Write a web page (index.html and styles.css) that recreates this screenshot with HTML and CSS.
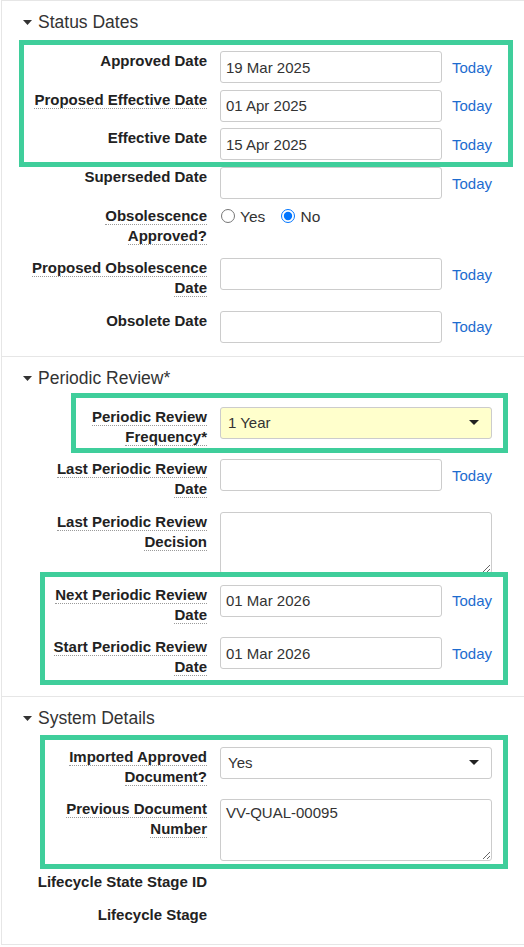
FILE: index.html
```html
<!DOCTYPE html>
<html lang="en">
<head>
<meta charset="utf-8">
<title>Document Details</title>
<link rel="stylesheet" href="styles.css">
</head>
<body>
<div class="page">

  <section class="section">
    <div class="hdr">
      <svg class="caret" width="9" height="5" viewBox="0 0 9 5"><path d="M0 0H9L4.5 5Z"/></svg>
      <span>Status Dates</span>
    </div>
    <div class="rows">
      <div class="group">
        <div class="row">
          <div class="label">Approved Date</div>
          <div class="value"><input class="date" type="text" value="19 Mar 2025"><a class="today" href="#">Today</a></div>
        </div>
        <div class="row">
          <div class="label"><span class="help">Proposed Effective Date</span></div>
          <div class="value"><input class="date" type="text" value="01 Apr 2025"><a class="today" href="#">Today</a></div>
        </div>
        <div class="row">
          <div class="label">Effective Date</div>
          <div class="value"><input class="date" type="text" value="15 Apr 2025"><a class="today" href="#">Today</a></div>
        </div>
        <div class="hl hl-1"></div>
      </div>
      <div class="row">
        <div class="label">Superseded Date</div>
        <div class="value"><input class="date" type="text" value=""><a class="today" href="#">Today</a></div>
      </div>
      <div class="row">
        <div class="label"><span class="help">Obsolescence Approved?</span></div>
        <div class="value value-radio">
          <label class="opt"><input type="radio" name="obs"><span>Yes</span></label>
          <label class="opt"><input type="radio" name="obs" checked><span>No</span></label>
        </div>
      </div>
      <div class="row">
        <div class="label"><span class="help">Proposed Obsolescence Date</span></div>
        <div class="value"><input class="date" type="text" value=""><a class="today" href="#">Today</a></div>
      </div>
      <div class="row">
        <div class="label">Obsolete Date</div>
        <div class="value"><input class="date" type="text" value=""><a class="today" href="#">Today</a></div>
      </div>
    </div>
  </section>

  <section class="section">
    <div class="hdr">
      <svg class="caret" width="9" height="5" viewBox="0 0 9 5"><path d="M0 0H9L4.5 5Z"/></svg>
      <span>Periodic Review*</span>
    </div>
    <div class="rows">
      <div class="group">
        <div class="row">
          <div class="label"><span class="help">Periodic Review Frequency*</span></div>
          <div class="value">
            <div class="select select-req"><span>1 Year</span><svg class="arrow" width="10" height="5" viewBox="0 0 10 5"><path d="M0 0H10L5 5Z"/></svg></div>
          </div>
        </div>
        <div class="hl hl-2"></div>
      </div>
      <div class="row">
        <div class="label"><span class="help">Last Periodic Review Date</span></div>
        <div class="value"><input class="date" type="text" value=""><a class="today" href="#">Today</a></div>
      </div>
      <div class="row">
        <div class="label"><span class="help">Last Periodic Review Decision</span></div>
        <div class="value value-top"><textarea class="area"></textarea></div>
      </div>
      <div class="group">
        <div class="row">
          <div class="label"><span class="help">Next Periodic Review Date</span></div>
          <div class="value"><input class="date" type="text" value="01 Mar 2026"><a class="today" href="#">Today</a></div>
        </div>
        <div class="row">
          <div class="label"><span class="help">Start Periodic Review Date</span></div>
          <div class="value"><input class="date" type="text" value="01 Mar 2026"><a class="today" href="#">Today</a></div>
        </div>
        <div class="hl hl-3"></div>
      </div>
    </div>
  </section>

  <section class="section">
    <div class="hdr">
      <svg class="caret" width="9" height="5" viewBox="0 0 9 5"><path d="M0 0H9L4.5 5Z"/></svg>
      <span>System Details</span>
    </div>
    <div class="rows">
      <div class="group">
        <div class="row">
          <div class="label"><span class="help">Imported Approved Document?</span></div>
          <div class="value">
            <div class="select"><span>Yes</span><svg class="arrow" width="10" height="5" viewBox="0 0 10 5"><path d="M0 0H10L5 5Z"/></svg></div>
          </div>
        </div>
        <div class="row">
          <div class="label"><span class="help">Previous Document Number</span></div>
          <div class="value value-top"><textarea class="area">VV-QUAL-00095</textarea></div>
        </div>
        <div class="hl hl-4"></div>
      </div>
      <div class="row">
        <div class="label">Lifecycle State Stage ID</div>
        <div class="value"></div>
      </div>
      <div class="row">
        <div class="label">Lifecycle Stage</div>
        <div class="value"></div>
      </div>
    </div>
  </section>

</div>
</body>
</html>
```

FILE: styles.css
```css
* { box-sizing: border-box; }

html, body {
  margin: 0;
  padding: 0;
  background: #ffffff;
}

body {
  font-family: "Liberation Sans", Arial, sans-serif;
  color: #333333;
  font-size: 15px;
}

.page {
  margin-left: 1px;
  border-left: 1px solid #e6e6e6;
  border-top: 1px solid #e6e6e6;
  border-bottom: 1px solid #e6e6e6;
}

.section {
  padding: 8px 0 13px;
}

.section + .section {
  border-top: 1px solid #e6e6e6;
}

.hdr {
  display: flex;
  align-items: center;
  height: 26px;
  margin-bottom: 16px;
  padding-left: 21px;
  font-size: 17.5px;
  line-height: 26px;
  color: #333333;
}

.caret {
  fill: #333333;
  margin-right: 6px;
  margin-top: 1px;
}

.rows {
  display: flex;
  flex-direction: column;
  gap: 6.7px;
}

.group {
  position: relative;
  display: flex;
  flex-direction: column;
  gap: 6.7px;
}

.row {
  display: flex;
  padding-left: 29px;
}

.label {
  flex: none;
  width: 176px;
  text-align: right;
  font-weight: bold;
  font-size: 15px;
  line-height: 20px;
  padding-bottom: 5.8px;
  color: #222222;
}

.help {
  border-bottom: 1px dotted #9a9a9a;
}

.value {
  margin-left: 13px;
  display: flex;
  align-items: center;
  min-height: 25px;
  align-self: flex-start;
}

.value-top {
  align-items: flex-start;
}

.date {
  width: 222px;
  height: 32px;
  border: 1px solid #cccccc;
  border-radius: 3px;
  padding: 0 5px;
  margin: 0;
  font-family: "Liberation Sans", Arial, sans-serif;
  font-size: 15px;
  color: #333333;
  background: #ffffff;
  outline: none;
}

.today {
  margin-left: 10px;
  color: #1d6ccf;
  text-decoration: none;
  font-size: 15px;
}

.value-radio {
  display: block;
  line-height: 20px;
  padding-top: 1px;
}

.opt {
  font-size: 15.5px;
  color: #333333;
  margin-right: 11px;
}

.opt input {
  margin: 0 5px 0 1px;
  width: 14px;
  height: 14px;
  vertical-align: -1px;
}

.select {
  width: 272px;
  height: 32px;
  border: 1px solid #cccccc;
  border-radius: 3px;
  background: #ffffff;
  display: flex;
  align-items: center;
  justify-content: space-between;
  padding: 0 12px 0 7px;
  font-size: 15px;
  color: #333333;
}

.select-req {
  background: #ffffcc;
}

.arrow {
  fill: #222222;
}

.area {
  display: block;
  width: 272px;
  height: 62px;
  margin: 0 0 4.3px;
  border: 1px solid #cccccc;
  border-radius: 3px;
  padding: 4px 5px;
  font-family: "Liberation Sans", Arial, sans-serif;
  font-size: 15px;
  line-height: 17px;
  color: #333333;
  resize: vertical;
  outline: none;
}

.hl {
  position: absolute;
  border: 5px solid #3fce9b;
  pointer-events: none;
}

.hl-1 { top: -11px; bottom: -7px; left: 17px; right: 11px; }
.hl-2 { top: -14px; bottom: 0; left: 69px; right: 16px; }
.hl-3 { top: -13px; bottom: -2px; left: 38px; right: 16px; }
.hl-4 { top: -12px; bottom: -3px; left: 38px; right: 16px; }
```
